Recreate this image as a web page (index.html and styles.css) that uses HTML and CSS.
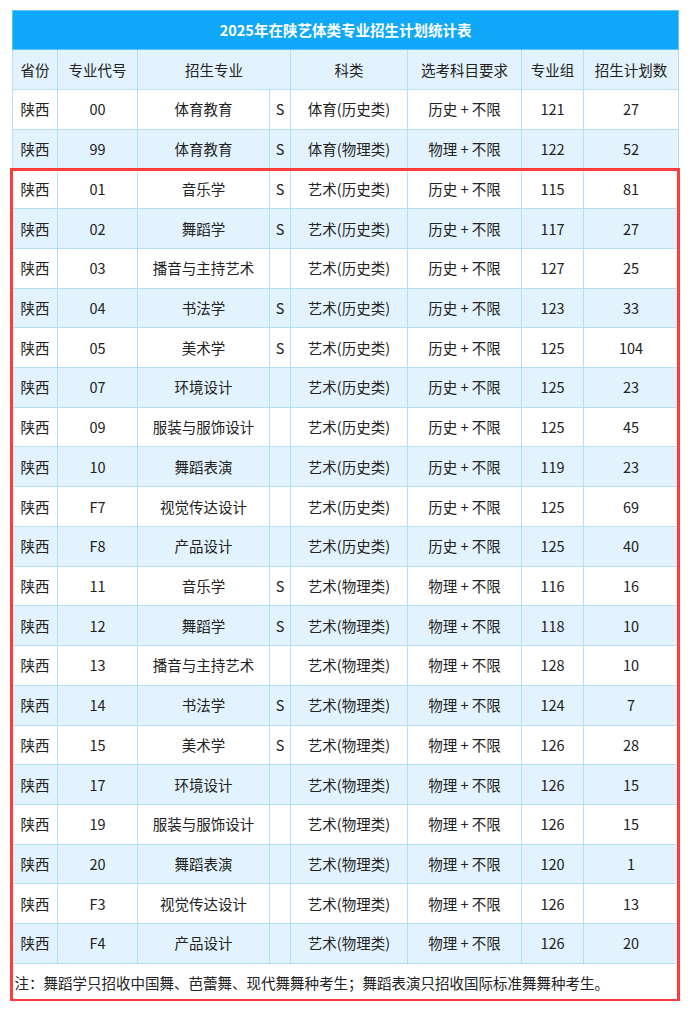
FILE: index.html
```html
<!DOCTYPE html>
<html lang="zh">
<head>
<meta charset="utf-8">
<link rel="stylesheet" href="styles.css">
</head>
<body>
<div class="wrap">
<table class="plan">
<colgroup>
<col class="c1"><col class="c2"><col class="c3"><col class="c4"><col class="c5"><col class="c6"><col class="c7"><col class="c8">
</colgroup>
<thead>
<tr class="title"><th colspan="8">2025年在陕艺体类专业招生计划统计表</th></tr>
<tr class="head"><th>省份</th><th>专业代号</th><th colspan="2">招生专业</th><th>科类</th><th>选考科目要求</th><th>专业组</th><th>招生计划数</th></tr>
</thead>
<tbody>
<tr><td>陕西</td><td>00</td><td>体育教育</td><td>S</td><td>体育(历史类)</td><td>历史 + 不限</td><td>121</td><td>27</td></tr>
<tr><td>陕西</td><td>99</td><td>体育教育</td><td>S</td><td>体育(物理类)</td><td>物理 + 不限</td><td>122</td><td>52</td></tr>
<tr><td>陕西</td><td>01</td><td>音乐学</td><td>S</td><td>艺术(历史类)</td><td>历史 + 不限</td><td>115</td><td>81</td></tr>
<tr><td>陕西</td><td>02</td><td>舞蹈学</td><td>S</td><td>艺术(历史类)</td><td>历史 + 不限</td><td>117</td><td>27</td></tr>
<tr><td>陕西</td><td>03</td><td>播音与主持艺术</td><td></td><td>艺术(历史类)</td><td>历史 + 不限</td><td>127</td><td>25</td></tr>
<tr><td>陕西</td><td>04</td><td>书法学</td><td>S</td><td>艺术(历史类)</td><td>历史 + 不限</td><td>123</td><td>33</td></tr>
<tr><td>陕西</td><td>05</td><td>美术学</td><td>S</td><td>艺术(历史类)</td><td>历史 + 不限</td><td>125</td><td>104</td></tr>
<tr><td>陕西</td><td>07</td><td>环境设计</td><td></td><td>艺术(历史类)</td><td>历史 + 不限</td><td>125</td><td>23</td></tr>
<tr><td>陕西</td><td>09</td><td>服装与服饰设计</td><td></td><td>艺术(历史类)</td><td>历史 + 不限</td><td>125</td><td>45</td></tr>
<tr><td>陕西</td><td>10</td><td>舞蹈表演</td><td></td><td>艺术(历史类)</td><td>历史 + 不限</td><td>119</td><td>23</td></tr>
<tr><td>陕西</td><td>F7</td><td>视觉传达设计</td><td></td><td>艺术(历史类)</td><td>历史 + 不限</td><td>125</td><td>69</td></tr>
<tr><td>陕西</td><td>F8</td><td>产品设计</td><td></td><td>艺术(历史类)</td><td>历史 + 不限</td><td>125</td><td>40</td></tr>
<tr><td>陕西</td><td>11</td><td>音乐学</td><td>S</td><td>艺术(物理类)</td><td>物理 + 不限</td><td>116</td><td>16</td></tr>
<tr><td>陕西</td><td>12</td><td>舞蹈学</td><td>S</td><td>艺术(物理类)</td><td>物理 + 不限</td><td>118</td><td>10</td></tr>
<tr><td>陕西</td><td>13</td><td>播音与主持艺术</td><td></td><td>艺术(物理类)</td><td>物理 + 不限</td><td>128</td><td>10</td></tr>
<tr><td>陕西</td><td>14</td><td>书法学</td><td>S</td><td>艺术(物理类)</td><td>物理 + 不限</td><td>124</td><td>7</td></tr>
<tr><td>陕西</td><td>15</td><td>美术学</td><td>S</td><td>艺术(物理类)</td><td>物理 + 不限</td><td>126</td><td>28</td></tr>
<tr><td>陕西</td><td>17</td><td>环境设计</td><td></td><td>艺术(物理类)</td><td>物理 + 不限</td><td>126</td><td>15</td></tr>
<tr><td>陕西</td><td>19</td><td>服装与服饰设计</td><td></td><td>艺术(物理类)</td><td>物理 + 不限</td><td>126</td><td>15</td></tr>
<tr><td>陕西</td><td>20</td><td>舞蹈表演</td><td></td><td>艺术(物理类)</td><td>物理 + 不限</td><td>120</td><td>1</td></tr>
<tr><td>陕西</td><td>F3</td><td>视觉传达设计</td><td></td><td>艺术(物理类)</td><td>物理 + 不限</td><td>126</td><td>13</td></tr>
<tr><td>陕西</td><td>F4</td><td>产品设计</td><td></td><td>艺术(物理类)</td><td>物理 + 不限</td><td>126</td><td>20</td></tr>
<tr class="note"><td colspan="8">注：舞蹈学只招收中国舞、芭蕾舞、现代舞舞种考生；舞蹈表演只招收国际标准舞舞种考生。</td></tr>
</tbody>
</table>
<div class="highlight"></div>
</div>
</body>
</html>
```
FILE: styles.css
```css
html, body {
  margin: 0;
  padding: 0;
  background: #ffffff;
}
body {
  padding: 10px 0 0 12px;
  font-family: "Noto Sans CJK SC", "Noto Sans", sans-serif;
  color: #222222;
}
.wrap {
  position: relative;
  width: 666px;
}
.plan {
  width: 666px;
  table-layout: fixed;
  border-collapse: collapse;
  font-size: 14.5px;
}
.c1 { width: 45px; }
.c2 { width: 80px; }
.c3 { width: 132px; }
.c4 { width: 21px; }
.c5 { width: 117px; }
.c6 { width: 114px; }
.c7 { width: 62px; }
.c8 { width: 95px; }
.plan th, .plan td {
  border: 1px solid #b3e0f7;
  text-align: center;
  vertical-align: middle;
  padding: 0;
  font-weight: normal;
  line-height: 20px;
  white-space: nowrap;
}
.plan .title th {
  background: #10a8f8;
  color: #ffffff;
  font-weight: bold;
  font-size: 14.5px;
  height: 38px;
  border-color: #5cc4fa;
}
.plan .head th {
  background: #e3f3fd;
  height: 39px;
}
.plan tbody tr {
  height: 39.73px;
}
.plan tbody tr:nth-child(even) td {
  background: #e3f3fd;
}
.plan tbody tr.note {
  height: 38px;
}
.plan tbody tr.note td {
  background: #ffffff;
  text-align: left;
  padding-left: 2px;
  border: none;
}
.highlight {
  position: absolute;
  left: -2px;
  top: 158px;
  width: 664px;
  height: 828px;
  border: 3px solid #ff3b3b;
  pointer-events: none;
}
```
